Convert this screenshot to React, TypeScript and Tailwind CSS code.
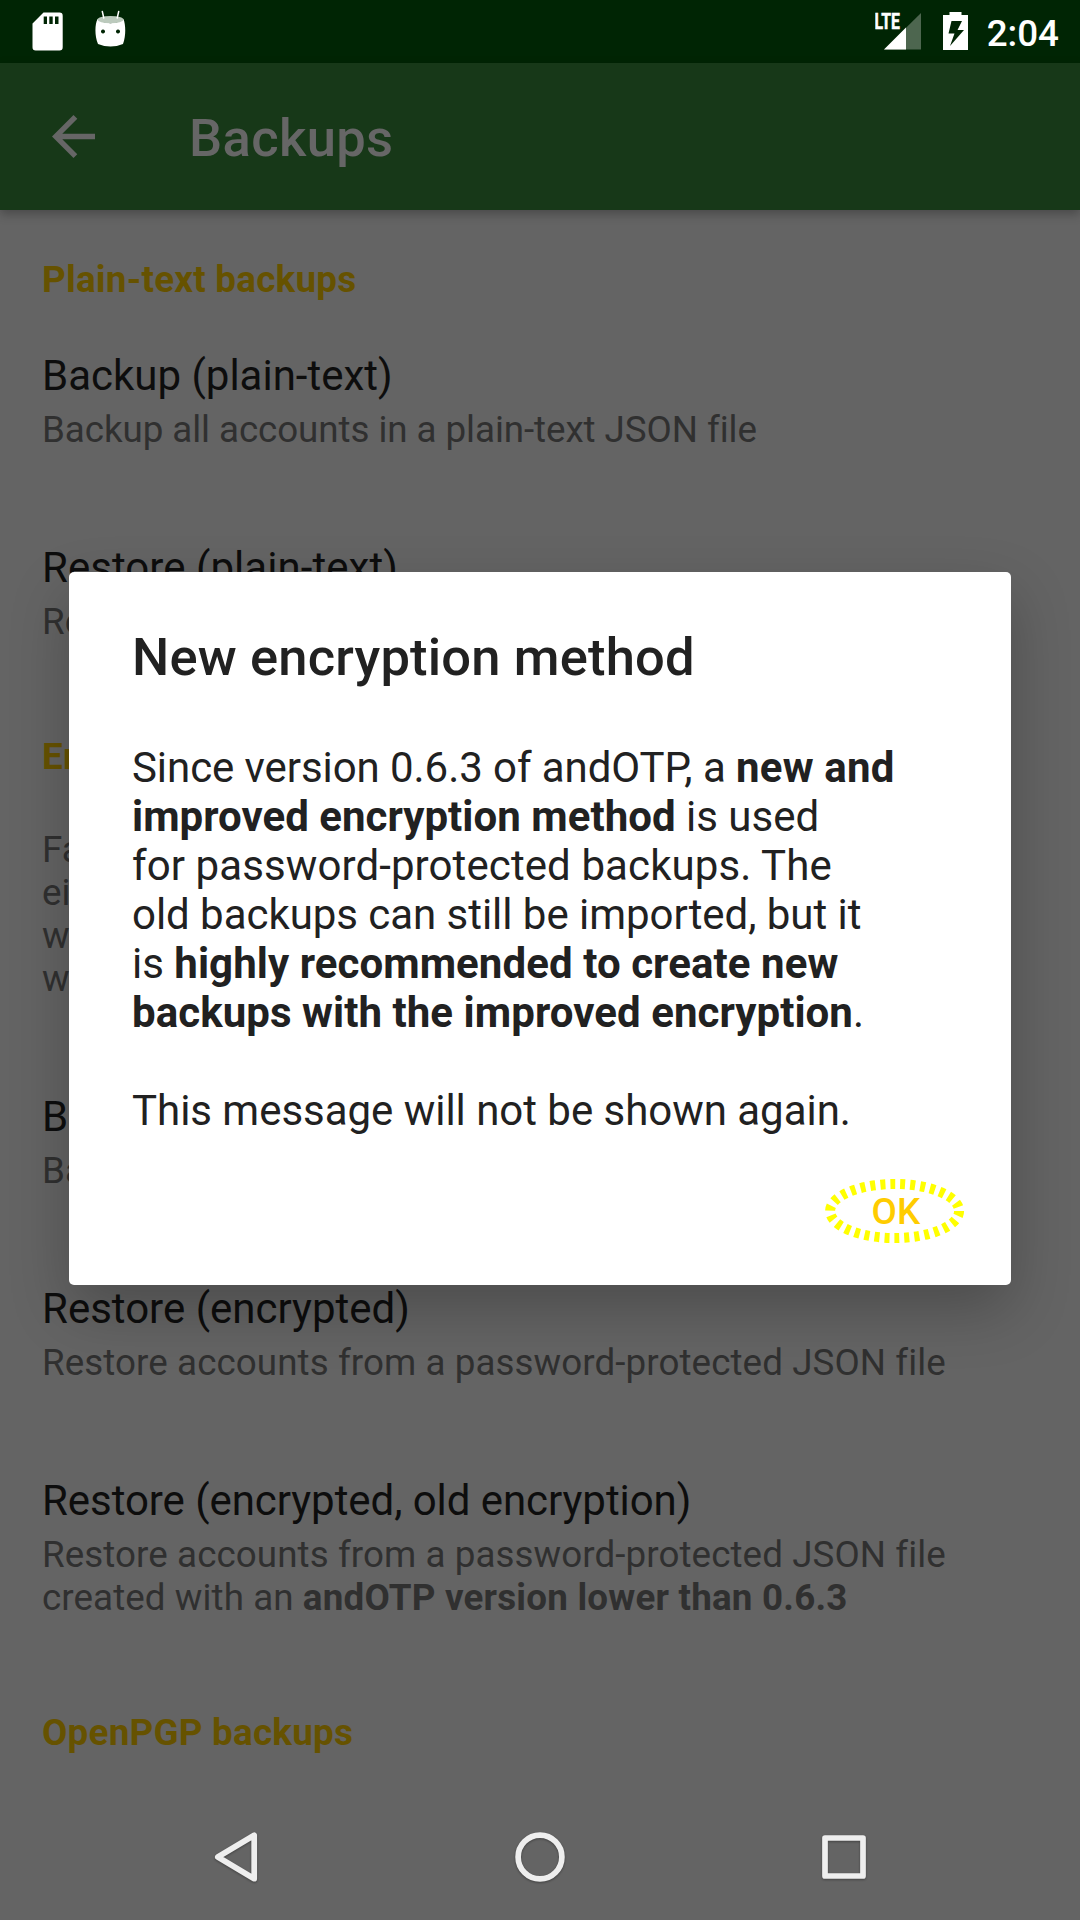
import type { ReactNode } from "react";

function Header({ children, className }: { children: ReactNode; className: string }) {
  return (
    <h2 className={`text-[36.75px] leading-[43px] font-bold tracking-[0.26px] text-[#665200] ${className}`}>{children}</h2>
  );
}

function Pref({ title, children, className }: { title: ReactNode; children: ReactNode; className: string }) {
  return (
    <div className={`flex flex-col gap-[8px] ${className}`}>
      <div className="text-[42px] leading-[49px] text-[#0d0d0d]">{title}</div>
      <div className="text-[36.75px] leading-[43px] text-[#303030]">{children}</div>
    </div>
  );
}

function StatusBar() {
  return (
    <div className="flex h-[63px] items-start bg-[#002504]">
      <svg className="ml-[32px] mt-[12px] shrink-0" width="31" height="39" viewBox="0 0 31 39" fill="#fff">
        <path
          fillRule="evenodd"
          d="M11.5 .5H27.5Q30.7 .5 30.7 3.7V35.3Q30.7 38.5 27.5 38.5H3.7Q.5 38.5 .5 35.3V11.5ZM11.7 4.5V12H15V4.5ZM17.3 4.5V12H20.7V4.5ZM23 4.5V12H26.5V4.5Z"
        />
      </svg>
      <svg className="ml-[31px] mt-[10px] shrink-0" width="33" height="38" viewBox="0 0 33 38">
        <path
          fill="#fff"
          fillRule="evenodd"
          d="M3.5 9C9 14.5 24 14.5 29.5 9C31.5 14 32.3 25 29 34Q16.500 39 4 34C.3 25 1 14 3.500 9ZM9 19.500a2 2 0 1 0 .01 0ZM24 19.500a2 2 0 1 0 .01 0Z"
        />
        <ellipse cx="16.500" cy="9.600" rx="13" ry="3.600" fill="#bccabd" />
        <path d="M8.300 1.500L9.800 8M24.700 1.500L23.200 8" stroke="#fff" strokeWidth="1.500" strokeLinecap="round" />
      </svg>
      <div className="grow" />
      <svg className="mt-[12px] shrink-0" width="47" height="39" viewBox="0 0 47 39">
        <path d="M46 1V37.500H9Z" fill="#4d664f" />
        <path d="M31 15.500V37.500H9Z" fill="#fff" />
        <text x="-0.5" y="17.200" textLength="25.5" lengthAdjust="spacingAndGlyphs" fill="#fff" stroke="#fff" strokeWidth="0.5" className="text-[22px] font-bold">
          LTE
        </text>
      </svg>
      <svg className="ml-[21px] mt-[12px] shrink-0" width="25" height="38" viewBox="0 0 25 38" fill="#fff">
        <path fillRule="evenodd" d="M6.500 0H18.500V3H25V38H0V3H6.500ZM8.500 9L5.500 21.500H11.500L7 34L21 18H14.500L19 9Z" />
      </svg>
      <div className="ml-[19px] mr-[21px] mt-[12px] text-[36.75px] leading-[43px] font-medium text-white">2:04</div>
    </div>
  );
}

export default function App() {
  return (
    <div className="relative flex h-[1920px] w-[1080px] flex-col overflow-hidden bg-[#646464] font-['Roboto',sans-serif]">
      <StatusBar />
      <header className="z-[1] flex h-[147px] shrink-0 items-center bg-[#173818] shadow-[0_4px_10px_rgba(0,0,0,0.28)]">
        <svg className="ml-[52px]" width="43" height="43" viewBox="4 4 16 16" fill="#666">
          <path d="M20 11H7.830l5.590-5.590L12 4l-8 8 8 8 1.410-1.410L7.830 13H20v-2z" />
        </svg>
        <h1 className="ml-[94px] mt-[3px] text-[52.5px] leading-[62px] font-medium tracking-[0.35px] text-[#666]">Backups</h1>
      </header>
      <main className="flex h-[1584px] shrink-0 flex-col overflow-hidden px-[42px]">
        <Header className="mt-[48px]">Plain-text backups</Header>
        <Pref className="mt-[50px]" title="Backup (plain-text)">
          <span className="tracking-[-0.07px]">Backup all accounts in a plain-text JSON file</span>
        </Pref>
        <Pref className="mt-[92px]" title={<span className="tracking-[0.05px]">Restore (plain-text)</span>}>
          Restore accounts
        </Pref>
        <Header className="mt-[92px]">Encrypted backups</Header>
        <p className="mt-[50px] text-[36.75px] leading-[43px] text-[#303030]">
          Failed
          <br />
          either
          <br />
          with
          <br />
          will
        </p>
        <Pref className="mt-[92px]" title="Backup (encrypted)">
          Backup all accounts
        </Pref>
        <Pref className="mt-[92px]" title="Restore (encrypted)">
          <span className="tracking-[0.08px]">Restore accounts from a password-protected JSON file</span>
        </Pref>
        <Pref className="mt-[92px]" title={<span className="tracking-[-0.06px]">Restore (encrypted, old encryption)</span>}>
          <span className="tracking-[0.08px]">
            Restore accounts from a password-protected JSON file
            <br />
            created with an <b className="tracking-[0.21px]">andOTP version lower than 0.6.3</b>
          </span>
        </Pref>
        <Header className="mt-[92px]">OpenPGP backups</Header>
      </main>
      <nav className="flex h-[126px] shrink-0 items-center">
        <svg width="1080" height="126" viewBox="0 1794 1080 126" fill="none" stroke="#eee" strokeWidth="5.7" strokeLinejoin="round" className="drop-shadow-[0_1px_1px_rgba(0,0,0,0.35)]">
          <path d="M254.200 1835.200V1878.700L217.800 1857Z" />
          <circle cx="540" cy="1857" r="21.900" />
          <rect x="825" y="1838" width="38" height="38" />
        </svg>
      </nav>

      <section
        role="dialog"
        className="absolute left-[69px] top-[572px] z-10 flex h-[713px] w-[942px] flex-col rounded-[5px] bg-white px-[63px] text-[#212121] shadow-[0_24px_60px_rgba(0,0,0,0.24)]"
      >
        <h2 className="mt-[54px] text-[52.5px] leading-[62px] font-medium tracking-[0.17px]">New encryption method</h2>
        <p className="mt-[55px] text-[42px] leading-[49px] whitespace-nowrap">
          <span className="tracking-[-0.07px]">Since version 0.6.3 of andOTP, a </span>
          <b className="tracking-[0.2px]">new and</b>
          <br />
          <b className="tracking-[0.03px]">improved encryption method</b> is used
          <br />
          <span className="tracking-[0.1px]">for password-protected backups. The</span>
          <br />
          <span className="tracking-[-0.04px]">old backups can still be imported, but it</span>
          <br />
          is <b className="tracking-[0.07px]">highly recommended to create new</b>
          <br />
          <b className="tracking-[0.06px]">backups with the improved encryption</b>.
          <br />
          <br />
          <span className="tracking-[-0.03px]">This message will not be shown again.</span>
        </p>
        <button className="relative mt-[43px] mr-[-19px] flex h-[66px] w-[142px] items-center justify-center self-end text-[36.75px] leading-[43px] font-medium tracking-[0.3px] text-[#ffcc00]">
          <svg className="absolute inset-0" width="142" height="66" viewBox="0 0 142 66">
            <ellipse cx="69.600" cy="33" rx="64.500" ry="27" fill="none" stroke="#ff0" strokeWidth="10" strokeDasharray="5 5" />
          </svg>
          <span className="relative">OK</span>
        </button>
      </section>
    </div>
  );
}
